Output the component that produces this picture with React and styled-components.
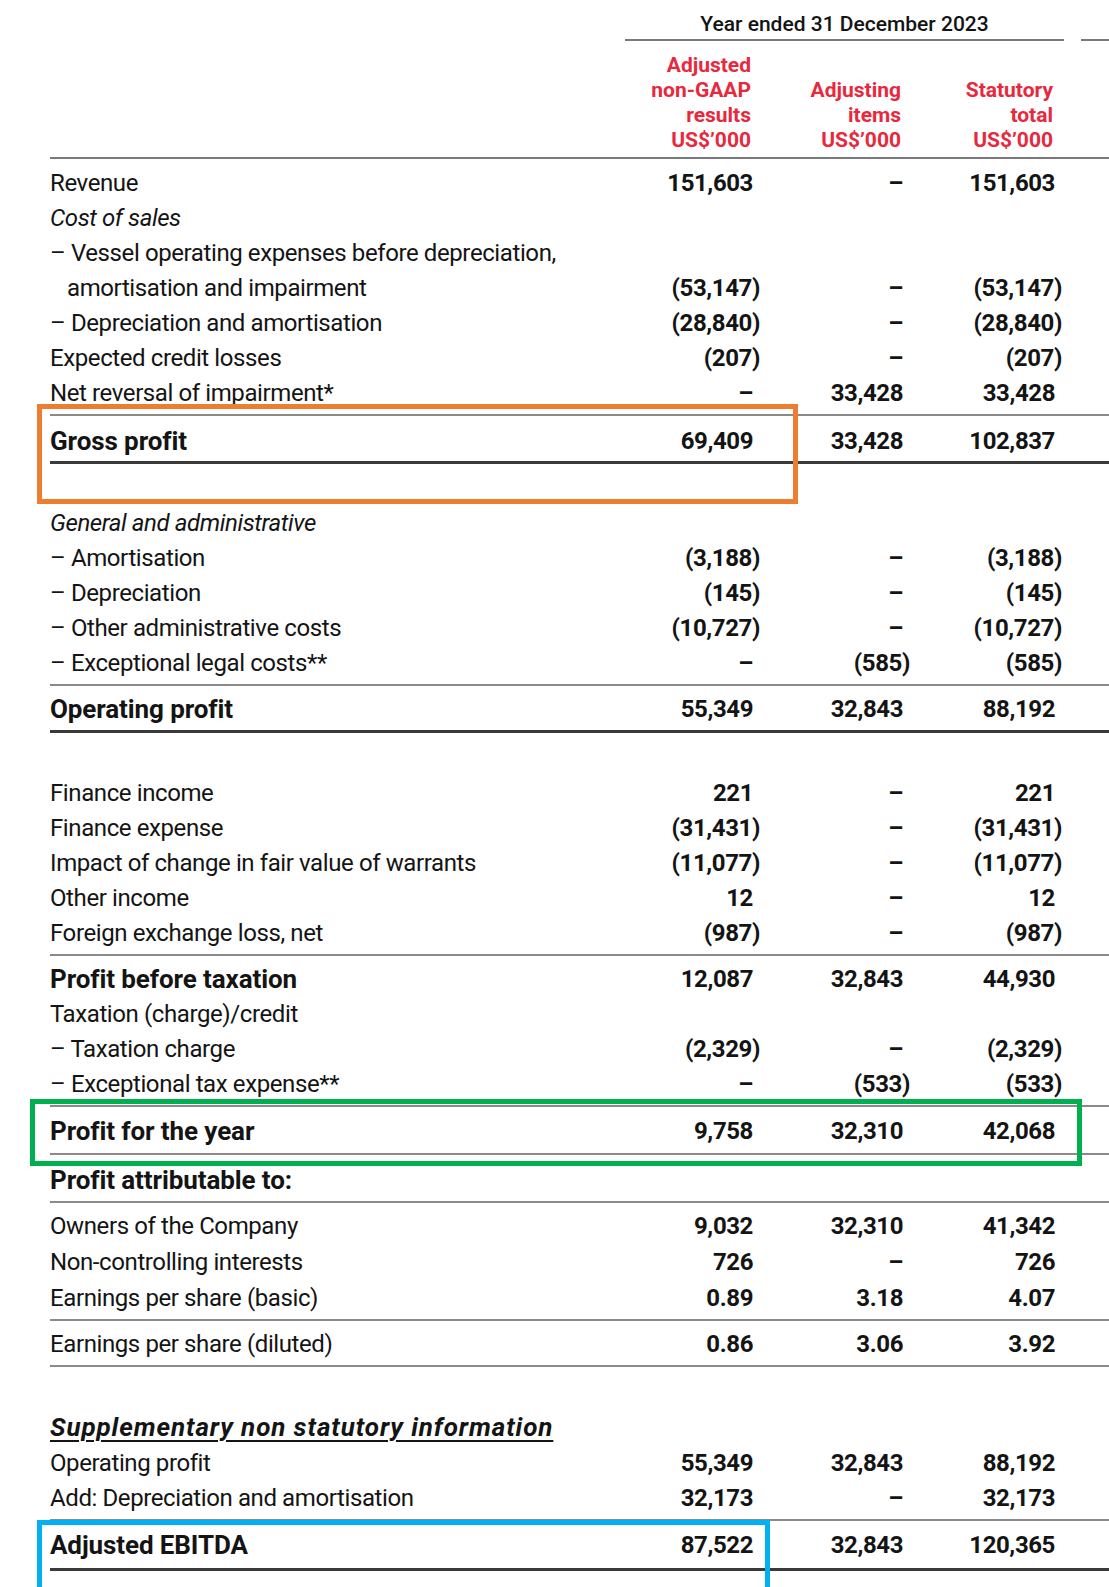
import React from 'react';
import styled, { createGlobalStyle } from 'styled-components';

const GlobalStyle = createGlobalStyle`
  html, body {
    margin: 0;
    padding: 0;
    background: #fff;
  }
  body {
    font-family: Roboto, 'Liberation Sans', sans-serif;
    color: #141414;
  }
`;

const Page = styled.div`
  position: relative;
  width: 1109px;
  height: 1587px;
  overflow: hidden;
  background: #fff;
`;

const PeriodBar = styled.div`
  display: flex;
  gap: 17px;
  padding: 10px 0 0 625px;
`;

const PeriodTitle = styled.div`
  width: 439px;
  text-align: center;
  font-size: 21px;
  font-weight: 500;
  line-height: 29px;
  border-bottom: 2px solid #7a7a7a;
`;

const PeriodStub = styled.div`
  flex: 1;
  border-bottom: 2px solid #7a7a7a;
`;

const Table = styled.div`
  padding-left: 50px;
`;

const Row = styled.div`
  display: grid;
  grid-template-columns: 1fr 150px 150px 152px 54px;
  align-items: end;
  font-size: 24px;
  line-height: ${p => p.$lh || 35}px;
  margin-top: ${p => (p.$top ? 3 : 0)}px;
  padding-top: ${p => (p.$padTop != null ? p.$padTop : p.$top ? 6 : 0)}px;
  padding-bottom: ${p => (p.$padBottom != null ? p.$padBottom : p.$bottom ? 3 : 0)}px;
  border-top: ${p => (p.$top ? '2px solid #8a8a8a' : 'none')};
  border-bottom: ${p =>
    p.$bottom === 'thick' ? '3px solid #3a3a3a' : p.$bottom ? '2px solid #8a8a8a' : 'none'};
`;

const HeadRow = styled(Row)`
  padding: 12px 0 4px;
  line-height: 25px;
  border-bottom: 2px solid #7a7a7a;
`;

const ColHead = styled.div`
  text-align: right;
  padding-right: 2px;
  color: #e8283c;
  font-size: 21px;
  font-weight: 700;
`;

const Label = styled.div`
  font-size: ${p => (p.$bold ? 26 : 24)}px;
  font-weight: ${p => (p.$bold ? 700 : 400)};
  font-style: ${p => (p.$italic ? 'italic' : 'normal')};
  padding-left: ${p => (p.$hang ? 17 : 0)}px;
  text-indent: ${p => (p.$hang ? -17 : 0)}px;
  letter-spacing: ${p => (p.$bold ? -0.1 : -0.4)}px;
  white-space: nowrap;
`;

const SectionTitle = styled(Label)`
  letter-spacing: 0.9px;
  text-decoration: underline;
  text-decoration-thickness: 2px;
  text-underline-offset: 4px;
`;

const Num = styled.div`
  text-align: right;
  font-weight: 700;
  letter-spacing: -0.4px;
`;

const Paren = styled.span`
  margin-right: -7px;
`;

const Gap = styled.div`
  height: ${p => p.$h}px;
`;

const Highlight = styled.div`
  position: absolute;
  left: ${p => p.$x}px;
  top: ${p => p.$y}px;
  width: ${p => p.$w}px;
  height: ${p => p.$h}px;
  border: 5px solid ${p => p.$color};
  box-sizing: border-box;
  pointer-events: none;
`;

const fmt = v =>
  v.endsWith(')') ? (
    <>
      {v.slice(0, -1)}
      <Paren>)</Paren>
    </>
  ) : (
    v
  );

const Line = ({ label, values, bold, italic, hang, top, bottom, padTop, padBottom, lh }) => (
  <Row $top={top} $bottom={bottom} $padTop={padTop} $padBottom={padBottom} $lh={lh}>
    <Label $bold={bold} $italic={italic} $hang={hang}>
      {label}
    </Label>
    {values && values.map((v, i) => <Num key={i}>{fmt(v)}</Num>)}
  </Row>
);

const App = () => (
  <Page>
    <GlobalStyle />
    <PeriodBar>
      <PeriodTitle>Year ended 31 December 2023</PeriodTitle>
      <PeriodStub />
    </PeriodBar>

    <Table>
      <HeadRow>
        <div />
        <ColHead>
          Adjusted
          <br />
          non-GAAP
          <br />
          results
          <br />
          US$’000
        </ColHead>
        <ColHead>
          Adjusting
          <br />
          items
          <br />
          US$’000
        </ColHead>
        <ColHead>
          Statutory
          <br />
          total
          <br />
          US$’000
        </ColHead>
      </HeadRow>

      <Gap $h={7} />
      <Line label="Revenue" values={['151,603', '–', '151,603']} />
      <Line label="Cost of sales" italic />
      <Line
        hang
        label={
          <>
            – Vessel operating expenses before depreciation,
            <br />
            amortisation and impairment
          </>
        }
        values={['(53,147)', '–', '(53,147)']}
      />
      <Line label="– Depreciation and amortisation" values={['(28,840)', '–', '(28,840)']} />
      <Line label="Expected credit losses" values={['(207)', '–', '(207)']} />
      <Line label="Net reversal of impairment*" values={['–', '33,428', '33,428']} />
      <Line
        label="Gross profit"
        bold
        top
        bottom="thick"
        padTop={8}
        padBottom={2}
        values={['69,409', '33,428', '102,837']}
      />

      <Gap $h={42} />
      <Line label="General and administrative" italic />
      <Line label="– Amortisation" values={['(3,188)', '–', '(3,188)']} />
      <Line label="– Depreciation" values={['(145)', '–', '(145)']} />
      <Line label="– Other administrative costs" values={['(10,727)', '–', '(10,727)']} />
      <Line label="– Exceptional legal costs**" values={['–', '(585)', '(585)']} />
      <Line label="Operating profit" bold top bottom="thick" values={['55,349', '32,843', '88,192']} />

      <Gap $h={43} />
      <Line label="Finance income" values={['221', '–', '221']} />
      <Line label="Finance expense" values={['(31,431)', '–', '(31,431)']} />
      <Line label="Impact of change in fair value of warrants" values={['(11,077)', '–', '(11,077)']} />
      <Line label="Other income" values={['12', '–', '12']} />
      <Line label="Foreign exchange loss, net" values={['(987)', '–', '(987)']} />
      <Line label="Profit before taxation" bold top values={['12,087', '32,843', '44,930']} />
      <Line label="Taxation (charge)/credit" />
      <Line label="– Taxation charge" values={['(2,329)', '–', '(2,329)']} />
      <Line label="– Exceptional tax expense**" values={['–', '(533)', '(533)']} />
      <Line
        label="Profit for the year"
        bold
        top
        bottom
        padTop={7}
        padBottom={4}
        values={['9,758', '32,310', '42,068']}
      />
      <Line label="Profit attributable to:" bold padTop={8} bottom />
      <Line label="Owners of the Company" padTop={6} values={['9,032', '32,310', '41,342']} />
      <Line label="Non-controlling interests" lh={36} values={['726', '–', '726']} />
      <Line label="Earnings per share (basic)" lh={36} values={['0.89', '3.18', '4.07']} />
      <Line label="Earnings per share (diluted)" top bottom values={['0.86', '3.06', '3.92']} />

      <Gap $h={43} />
      <Row>
        <SectionTitle $bold $italic>
          Supplementary non statutory information
        </SectionTitle>
      </Row>
      <Line label="Operating profit" lh={36} values={['55,349', '32,843', '88,192']} />
      <Line label="Add: Depreciation and amortisation" values={['32,173', '–', '32,173']} />
      <Line
        label="Adjusted EBITDA"
        bold
        top
        bottom="thick"
        padTop={7}
        padBottom={5}
        values={['87,522', '32,843', '120,365']}
      />
    </Table>

    <Highlight $color="#ed7d31" $x={37} $y={404} $w={761} $h={100} />
    <Highlight $color="#00b050" $x={30} $y={1099} $w={1052} $h={67} />
    <Highlight $color="#00b0f0" $x={37} $y={1520} $w={733} $h={72} />
  </Page>
);

export default App;
